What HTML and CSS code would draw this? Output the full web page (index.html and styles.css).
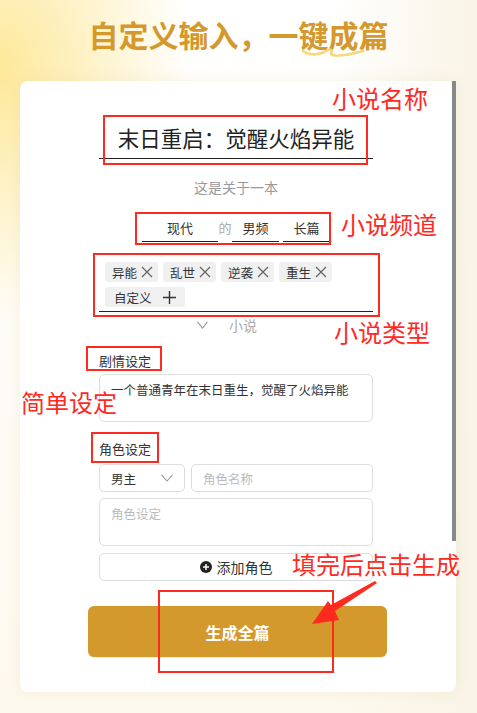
FILE: index.html
```html
<!DOCTYPE html>
<html lang="zh-CN">

<head>
    <meta charset="UTF-8">
    <meta name="viewport" content="width=device-width, initial-scale=1.0">
    <title>自定义输入，一键成篇</title>
    <link rel="stylesheet" href="styles.css">
</head>

<body>
    <header class="header">
        <h1 class="title">自定义输入，一键成篇</h1>
        <svg class="squiggle" width="70" height="14" viewBox="0 0 70 14">
            <path d="M5 6 C10 10, 20 11, 28 6 C32 3, 35 5, 33 9 C36 12, 50 10, 65 6" fill="none" stroke="#f6d77c" stroke-width="2.6" stroke-linecap="round" />
        </svg>
    </header>

    <div class="card">
        <div class="scroll-thumb"></div>

        <div class="form">
            <div class="name-field">末日重启：觉醒火焰异能</div>
            <div class="intro">这是关于一本</div>

            <div class="channel">
                <div class="ch-field ch-wide">现代</div>
                <div class="ch-sep">的</div>
                <div class="ch-field">男频</div>
                <div class="ch-field ch-last">长篇</div>
            </div>

            <div class="tags">
                <span class="tag">异能
                    <svg width="12" height="12" viewBox="0 0 12 12"><path d="M1 1 L11 11 M11 1 L1 11" stroke="#666" stroke-width="1.3" /></svg>
                </span>
                <span class="tag">乱世
                    <svg width="12" height="12" viewBox="0 0 12 12"><path d="M1 1 L11 11 M11 1 L1 11" stroke="#666" stroke-width="1.3" /></svg>
                </span>
                <span class="tag">逆袭
                    <svg width="12" height="12" viewBox="0 0 12 12"><path d="M1 1 L11 11 M11 1 L1 11" stroke="#666" stroke-width="1.3" /></svg>
                </span>
                <span class="tag">重生
                    <svg width="12" height="12" viewBox="0 0 12 12"><path d="M1 1 L11 11 M11 1 L1 11" stroke="#666" stroke-width="1.3" /></svg>
                </span>
                <span class="tag tag-add">自定义
                    <svg width="13" height="13" viewBox="0 0 13 13"><path d="M6.5 0 V13 M0 6.5 H13" stroke="#333" stroke-width="1.4" /></svg>
                </span>
            </div>

            <div class="more">
                <svg width="11" height="8" viewBox="0 0 11 8"><polyline points="0.5,0.8 5.5,7 10.5,0.8" fill="none" stroke="#999" stroke-width="1.1" /></svg>
                <span>小说</span>
            </div>

            <div class="label">剧情设定</div>
            <div class="area">一个普通青年在末日重生，觉醒了火焰异能</div>

            <div class="label">角色设定</div>
            <div class="role-row">
                <div class="select">
                    <span>男主</span>
                    <svg width="12" height="8" viewBox="0 0 12 8"><polyline points="0.5,0.8 6,7 11.5,0.8" fill="none" stroke="#999" stroke-width="1.1" /></svg>
                </div>
                <div class="input placeholder">角色名称</div>
            </div>
            <div class="area area-role placeholder">角色设定</div>

            <div class="add-btn">
                <svg width="12" height="12" viewBox="0 0 12 12">
                    <circle cx="6" cy="6" r="6" fill="#222" />
                    <path d="M6 3 V9 M3 6 H9" stroke="#fff" stroke-width="1.5" />
                </svg>
                <span>添加角色</span>
            </div>

            <div class="generate">生成全篇</div>
        </div>
    </div>

    <!-- red annotations laid over the screenshot -->
    <div class="marks">
        <div class="mark mark-name"></div>
        <div class="mark mark-channel"></div>
        <div class="mark mark-tags"></div>
        <div class="mark mark-plot"></div>
        <div class="mark mark-role"></div>
        <div class="mark mark-submit"></div>

        <div class="note note-name">小说名称</div>
        <div class="note note-channel">小说频道</div>
        <div class="note note-type">小说类型</div>
        <div class="note note-basic">简单设定</div>
        <div class="note note-submit">填完后点击生成</div>

        <svg class="arrow" width="80" height="55" viewBox="0 0 80 55">
            <polygon points="12,49 28,26 31,30 75,6 77,8 35,36 39,45" fill="#ff2a1f" />
        </svg>
    </div>
</body>

</html>
```

FILE: styles.css
```css
body {
    font-family: "Noto Sans CJK SC", "Noto Sans", sans-serif;
    margin: 0;
    padding: 0;
    width: 477px;
    height: 713px;
    overflow: hidden;
    position: relative;
    background:
        radial-gradient(ellipse 190px 250px at 0 70px, #fde899 0%, rgba(253, 232, 153, 0.55) 45%, rgba(253, 232, 153, 0) 100%),
        linear-gradient(90deg, rgba(249, 244, 230, 0) 70%, #f9f4e6 100%),
        linear-gradient(180deg, #ffffff 0%, #fdf9ee 100%);
}

.header {
    position: relative;
    height: 81px;
}

.title {
    margin: 0;
    line-height: 68px;
    font-size: 30px;
    font-weight: 700;
    color: #d4982c;
    text-align: center;
}

.squiggle {
    position: absolute;
    left: 298px;
    top: 45px;
}

.card {
    position: relative;
    margin-left: 20px;
    width: 436px;
    height: 611px;
    box-sizing: border-box;
    padding-top: 37px;
    background-color: #fff;
    border-radius: 8px;
    box-shadow: 0 0 14px rgba(210, 190, 130, 0.18);
}

.scroll-thumb {
    position: absolute;
    right: 0;
    top: 0;
    width: 4px;
    height: 460px;
    background-color: #888;
}

.form {
    width: 274px;
    margin-left: 79px;
    color: #333;
}

.name-field {
    font-size: 21.5px;
    line-height: 40px;
    text-align: center;
    color: #222;
    border-bottom: 1px solid #222;
}

.intro {
    margin-top: 19px;
    font-size: 14px;
    line-height: 18px;
    color: #999;
    text-align: center;
}

.channel {
    margin-top: 19px;
    display: flex;
    justify-content: center;
}

.ch-field {
    width: 47px;
    font-size: 13px;
    line-height: 26px;
    text-align: center;
    border-bottom: 1px solid #222;
}

.ch-wide {
    width: 76px;
}

.ch-last {
    margin-left: 4px;
}

.ch-sep {
    width: 14px;
    font-size: 13px;
    line-height: 26px;
    color: #aaa;
    text-align: center;
}

.tags {
    margin-top: 16px;
    padding: 4px 6px;
    display: flex;
    flex-wrap: wrap;
    gap: 5px;
    border-bottom: 1px solid #222;
}

.tag {
    height: 20px;
    display: flex;
    align-items: center;
    gap: 4px;
    padding: 0 5px 0 7px;
    font-size: 12.5px;
    color: #333;
    background-color: #f0f0f0;
    border-radius: 3px;
}

.tag-add {
    padding: 0 9px;
    gap: 11px;
}

.more {
    margin-top: 3px;
    height: 20px;
    display: flex;
    align-items: center;
    gap: 21px;
    padding-left: 98px;
    font-size: 14px;
    color: #aaa;
}

.label {
    margin-top: 17px;
    font-size: 13px;
    line-height: 18px;
    color: #333;
}

.label + .area {
    margin-top: 4px;
}

.area {
    height: 48px;
    box-sizing: border-box;
    padding: 6px 11px;
    font-size: 12.5px;
    line-height: 18px;
    color: #333;
    border: 1px solid #ddd;
    border-radius: 5px;
}

.area + .label {
    margin-top: 18px;
}

.role-row {
    margin-top: 6px;
    height: 28px;
    display: flex;
    gap: 6px;
}

.select {
    width: 86px;
    box-sizing: border-box;
    padding: 0 11px;
    display: flex;
    align-items: center;
    justify-content: space-between;
    font-size: 12.5px;
    border: 1px solid #ddd;
    border-radius: 5px;
}

.input {
    flex: 1;
    box-sizing: border-box;
    padding-left: 11px;
    display: flex;
    align-items: center;
    font-size: 12.5px;
    border: 1px solid #ddd;
    border-radius: 5px;
}

.area-role {
    margin-top: 6px;
}

.placeholder {
    color: #bbb;
}

.add-btn {
    margin-top: 7px;
    height: 28px;
    box-sizing: border-box;
    display: flex;
    align-items: center;
    justify-content: center;
    gap: 5px;
    font-size: 14px;
    color: #333;
    border: 1px solid #ddd;
    border-radius: 5px;
}

.generate {
    margin-top: 25px;
    margin-left: -11px;
    width: 299px;
    height: 51px;
    display: flex;
    align-items: center;
    justify-content: center;
    font-size: 16px;
    font-weight: 700;
    color: #fff;
    background-color: #d4992c;
    border-radius: 6px;
    box-shadow: 0 1px 0 #e0f4ea;
}

/* annotation layer */
.marks {
    position: absolute;
    left: 0;
    top: 0;
    width: 477px;
    height: 713px;
    pointer-events: none;
}

.mark {
    position: absolute;
    box-sizing: border-box;
    border: 2px solid #ff2a1f;
}

.mark-name {
    left: 103px;
    top: 115px;
    width: 265px;
    height: 50px;
}

.mark-channel {
    left: 135px;
    top: 212px;
    width: 196px;
    height: 33px;
}

.mark-tags {
    left: 93px;
    top: 253px;
    width: 287px;
    height: 64px;
}

.mark-plot {
    left: 86px;
    top: 346px;
    width: 76px;
    height: 25px;
}

.mark-role {
    left: 91px;
    top: 432px;
    width: 68px;
    height: 31px;
}

.mark-submit {
    left: 158px;
    top: 590px;
    width: 176px;
    height: 83px;
}

.note {
    position: absolute;
    font-size: 24px;
    line-height: 24px;
    color: #ff2a1f;
    white-space: nowrap;
}

.note-name {
    left: 332px;
    top: 86px;
}

.note-channel {
    left: 341px;
    top: 212px;
}

.note-type {
    left: 334px;
    top: 320px;
}

.note-basic {
    left: 21px;
    top: 390px;
}

.note-submit {
    left: 292px;
    top: 552px;
}

.arrow {
    position: absolute;
    left: 300px;
    top: 575px;
}
```
